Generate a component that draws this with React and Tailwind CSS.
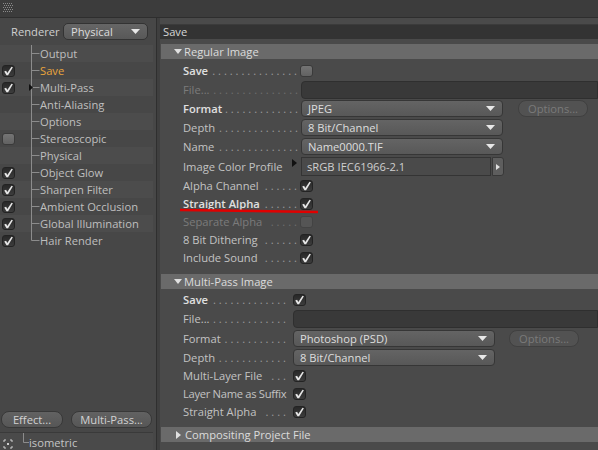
import React from 'react';

const leftItems = [
  { name: 'Output', check: null },
  { name: 'Save', check: true, active: true },
  { name: 'Multi-Pass', check: true, arrow: true },
  { name: 'Anti-Aliasing', check: null },
  { name: 'Options', check: null },
  { name: 'Stereoscopic', check: false },
  { name: 'Physical', check: null },
  { name: 'Object Glow', check: true },
  { name: 'Sharpen Filter', check: true },
  { name: 'Ambient Occlusion', check: true },
  { name: 'Global Illumination', check: true },
  { name: 'Hair Render', check: true },
];

const Tick = () => (
  <svg width="11" height="10" viewBox="0 0 11 10">
    <path d="M1.2 5.4 L3.1 4.7 L4.3 6.9 L8.5 0.8 L9.9 1.3 L5.1 9.3 L3.5 9.3 Z" fill="#e6e6e6" />
  </svg>
);

function Check({ on, dim }) {
  if (on) {
    return (
      <span className="flex w-[13px] h-[12px] shrink-0 items-center justify-center rounded-[3px] border border-[#232323] bg-gradient-to-b from-[#282828] to-[#3d3d3d]">
        <Tick />
      </span>
    );
  }
  if (dim) {
    return <span className="block w-[13px] h-[12px] shrink-0 rounded-[3px] border border-[#434343] bg-[#555555]" />;
  }
  return <span className="block w-[13px] h-[12px] shrink-0 rounded-[3px] border border-[#3a3a3a] bg-gradient-to-b from-[#747474] to-[#626262]" />;
}

const DownTri = () => (
  <svg width="9" height="5" viewBox="0 0 9 5">
    <path d="M0 0 H9 L4.5 5 Z" fill="#e8e8e8" />
  </svg>
);

function Dropdown({ value, w }) {
  return (
    <div className={`flex items-center h-[17px] shrink-0 rounded-[4px] border border-[#363636] bg-gradient-to-b from-[#646464] to-[#585858] pl-[6px] pr-[7px] ${w}`}>
      <span className="flex-1 text-[#dedede] whitespace-nowrap">{value}</span>
      <DownTri />
    </div>
  );
}

function OptionsBtn({ ml }) {
  return (
    <div className={`flex items-center justify-center w-[70px] h-[17px] rounded-[8px] border border-[#404040] bg-[#525252] text-[#7a7a7a] ${ml}`}>
      Options...
    </div>
  );
}

function Label({ text, w, bold, dim, dots = 0, pr = 'pr-[3px]', tight }) {
  const color = dim ? 'text-[#7b7b7b]' : bold ? 'text-[#e0e0e0] font-semibold' : 'text-[#c3c3c3]';
  return (
    <div className={`flex items-center shrink-0 ${w}`}>
      <span className={`whitespace-nowrap ${color} ${tight ? 'tracking-[-0.3px]' : ''}`}>{text}</span>
      {dots > 0 && (
        <span className={`flex-1 flex justify-end whitespace-nowrap ${pr} ${dim ? 'text-[#6e6e6e]' : 'text-[#9a9a9a]'}`}>
          {' .'.repeat(dots)}
        </span>
      )}
    </div>
  );
}

function GroupHeader({ title, open }) {
  return (
    <div className="flex items-center h-[15px] ml-[1px] bg-[#6a6a6a] text-[#dcdcdc] pl-[13px]">
      {open ? (
        <svg width="8" height="5" viewBox="0 0 8 5" className="mr-[2px]">
          <path d="M0 0 H8 L4 5 Z" fill="#e0e0e0" />
        </svg>
      ) : (
        <svg width="5" height="8" viewBox="0 0 5 8" className="mr-[4px] ml-[2px]">
          <path d="M0 0 V8 L5 4 Z" fill="#e0e0e0" />
        </svg>
      )}
      <span>{title}</span>
    </div>
  );
}

const FileInput = () => (
  <div className="flex-1 h-[18px] rounded-l-[4px] border border-[#2f2f2f] bg-[#393939]" />
);

export default function App() {
  return (
    <div className="relative w-[598px] h-[450px] overflow-hidden bg-[#474747] text-[11.2px] leading-none font-['Open_Sans','Noto_Sans',sans-serif] select-none">
      {/* top strip */}
      <div className="h-[18px] bg-[#3c3c3c] border-b border-[#2e2e2e] flex items-start pl-[3px] pt-[3px]">
        <svg width="10" height="9" viewBox="0 0 10 9">
          {[0, 2, 4, 6, 8].map((y) =>
            [0, 2, 4, 6, 8].map((x) => (
              <rect key={`${x}-${y}`} x={x + (y % 4 === 0 ? 0 : 1)} y={y} width="1" height="1" fill="#8a8a8a" />
            ))
          )}
        </svg>
      </div>

      <div className="flex h-[432px]">
        {/* left panel */}
        <div className="w-[156px] flex flex-col bg-[#474747]">
          <div className="flex items-center h-[17px] mt-[5px] pl-[11px]">
            <span className="text-[#cfcfcf] w-[52px]">Renderer</span>
            <div className="flex items-center w-[85px] h-[17px] rounded-[5px] border border-[#333333] bg-gradient-to-b from-[#666666] to-[#585858] pl-[7px] pr-[7px]">
              <span className="flex-1 text-[#dcdcdc]">Physical</span>
              <DownTri />
            </div>
          </div>

          <div className="mt-[5px] w-[153px]">
            {leftItems.map((it, i) => (
              <div key={it.name} className={`flex items-center h-[17px] ${i % 2 === 0 ? 'bg-[#4c4c4c]' : 'bg-[#474747]'}`}>
                <div className="w-[29px] pl-[2px] flex items-center">
                  {it.check !== null && <Check on={it.check} />}
                </div>
                <svg width="11" height="17" viewBox="0 0 11 17" className="shrink-0">
                  <path d={i === leftItems.length - 1 ? 'M2.5 0 V8.5' : 'M2.5 0 V17'} stroke="#8c8c8c" strokeWidth="1" />
                  <path d="M2.5 8.5 H10.5" stroke="#8c8c8c" strokeWidth="1" />
                  {it.arrow && <path d="M0 5 L4 8.5 L0 12 Z" fill="#111111" />}
                </svg>
                <span className={it.active ? 'text-[#eaa53c]' : 'text-[#bfbfbf]'}>{it.name}</span>
              </div>
            ))}
          </div>

          <div className="flex-1" />

          <div className="flex items-center gap-[8px] pl-[1px] mb-[4px]">
            <div className="flex items-center justify-center w-[62px] h-[17px] rounded-[8px] border border-[#383838] bg-gradient-to-b from-[#626262] to-[#565656] text-[#d2d2d2]">
              Effect...
            </div>
            <div className="flex items-center justify-center w-[81px] h-[17px] rounded-[8px] border border-[#383838] bg-gradient-to-b from-[#626262] to-[#565656] text-[#d2d2d2]">
              Multi-Pass...
            </div>
          </div>
          <div className="h-[18px] border-t border-[#3a3a3a] bg-[#4a4a4a] w-[153px] flex items-center">
            <svg width="10" height="10" viewBox="0 0 10 10" className="ml-[3px] mt-[4px]">
              <path d="M1 1 H3 M7 1 H9 V3 M9 7 V9 H7 M3 9 H1 V7 M1 3 V1" stroke="#d0d0d0" strokeWidth="1" fill="none" />
              <rect x="4" y="4" width="2" height="2" fill="#d0d0d0" />
            </svg>
            <svg width="7" height="17" viewBox="0 0 7 17" className="ml-[9px] shrink-0">
              <path d="M1.5 0 V9.5 M1.5 9.5 H7" stroke="#8c8c8c" strokeWidth="1" />
            </svg>
            <span className="text-[#c4c4c4] mt-[3px]">isometric</span>
          </div>
        </div>

        {/* divider */}
        <div className="w-[4px] bg-[#3f3f3f] border-l border-[#2f2f2f]" />

        {/* right panel */}
        <div className="flex-1 flex flex-col bg-[#4a4a4a] pt-[6px]">
          <div className="h-[15px] bg-[#333333] border-t border-[#3b3b3b] flex items-center pl-[3px] text-[#d6d6d6]">
            Save
          </div>

          <div className="mt-[5px]">
            <GroupHeader title="Regular Image" open />
            <div className="pt-[3px] pl-[23px]">
              <div className="flex items-center h-[18px]">
                <Label text="Save" w="w-[117px]" bold dots={15} />
                <Check on={false} />
              </div>
              <div className="flex items-center h-[19px]">
                <Label text="File..." w="w-[118px]" dim dots={15} />
                <FileInput />
              </div>
              <div className="flex items-center h-[19px]">
                <Label text="Format" w="w-[118px]" bold dots={13} />
                <Dropdown value="JPEG" w="w-[202px]" />
                <OptionsBtn ml="ml-[15px]" />
              </div>
              <div className="flex items-center h-[19px]">
                <Label text="Depth" w="w-[118px]" dots={14} />
                <Dropdown value="8 Bit/Channel" w="w-[202px]" />
              </div>
              <div className="flex items-center h-[19px]">
                <Label text="Name" w="w-[118px]" dots={14} />
                <Dropdown value="Name0000.TIF" w="w-[202px]" />
              </div>
              <div className="flex items-center h-[21px]">
                <div className="flex items-center w-[118px] shrink-0">
                  <span className="text-[#c3c3c3] flex-1">Image Color Profile</span>
                  <svg width="5" height="8" viewBox="0 0 5 8" className="mr-[4px] -mt-[6px]">
                    <path d="M0 0 V8 L5 4 Z" fill="#111111" />
                  </svg>
                </div>
                <div className="flex items-center w-[190px] h-[19px] border border-[#343434] bg-[#4a4a4a] pl-[5px] text-[#cfcfcf]">
                  sRGB IEC61966-2.1
                </div>
                <div className="flex items-center justify-center w-[12px] h-[19px] ml-[1px] rounded-r-[3px] border border-[#383838] bg-[#5e5e5e]">
                  <svg width="4" height="6" viewBox="0 0 4 6">
                    <path d="M0 0 V6 L4 3 Z" fill="#e0e0e0" />
                  </svg>
                </div>
              </div>
              <div className="flex items-center h-[18px]">
                <Label text="Alpha Channel" w="w-[117px]" dots={6} />
                <Check on />
              </div>
              <div className="flex items-center h-[18px]">
                <Label text="Straight Alpha" w="w-[117px]" bold dots={6} />
                <Check on />
              </div>
              <div className="flex items-center h-[18px]">
                <Label text="Separate Alpha" w="w-[117px]" dim dots={5} />
                <Check on={false} dim />
              </div>
              <div className="flex items-center h-[18px]">
                <Label text="8 Bit Dithering" w="w-[117px]" dots={6} />
                <Check on />
              </div>
              <div className="flex items-center h-[18px]">
                <Label text="Include Sound" w="w-[117px]" dots={6} />
                <Check on />
              </div>
            </div>
          </div>

          <div className="mt-[7px]">
            <GroupHeader title="Multi-Pass Image" open />
            <div className="pt-[1px] pl-[23px]">
              <div className="flex items-center h-[19px]">
                <Label text="Save" w="w-[110px]" bold pr="pr-[7px]" dots={13} />
                <Check on />
              </div>
              <div className="flex items-center h-[20px]">
                <Label text="File..." w="w-[110px]" pr="pr-[7px]" dots={13} />
                <FileInput />
              </div>
              <div className="flex items-center h-[19px]">
                <Label text="Format" w="w-[110px]" pr="pr-[7px]" dots={11} />
                <Dropdown value="Photoshop (PSD)" w="w-[202px]" />
                <OptionsBtn ml="ml-[14px]" />
              </div>
              <div className="flex items-center h-[19px]">
                <Label text="Depth" w="w-[110px]" pr="pr-[7px]" dots={12} />
                <Dropdown value="8 Bit/Channel" w="w-[202px]" />
              </div>
              <div className="flex items-center h-[18px]">
                <Label text="Multi-Layer File" w="w-[110px]" pr="pr-[7px]" dots={3} />
                <Check on />
              </div>
              <div className="flex items-center h-[18px]">
                <Label text="Layer Name as Suffix" w="w-[110px]" tight />
                <Check on />
              </div>
              <div className="flex items-center h-[18px]">
                <Label text="Straight Alpha" w="w-[110px]" pr="pr-[7px]" dots={4} />
                <Check on />
              </div>
            </div>
          </div>

          <div className="mt-[6px]">
            <GroupHeader title="Compositing Project File" />
          </div>
        </div>
      </div>

      {/* red annotation underline */}
      <svg className="absolute left-0 top-0 pointer-events-none" width="598" height="450">
        <path d="M180 210 Q250 211 318 212" stroke="#e00000" strokeWidth="2.5" fill="none" />
      </svg>
    </div>
  );
}
